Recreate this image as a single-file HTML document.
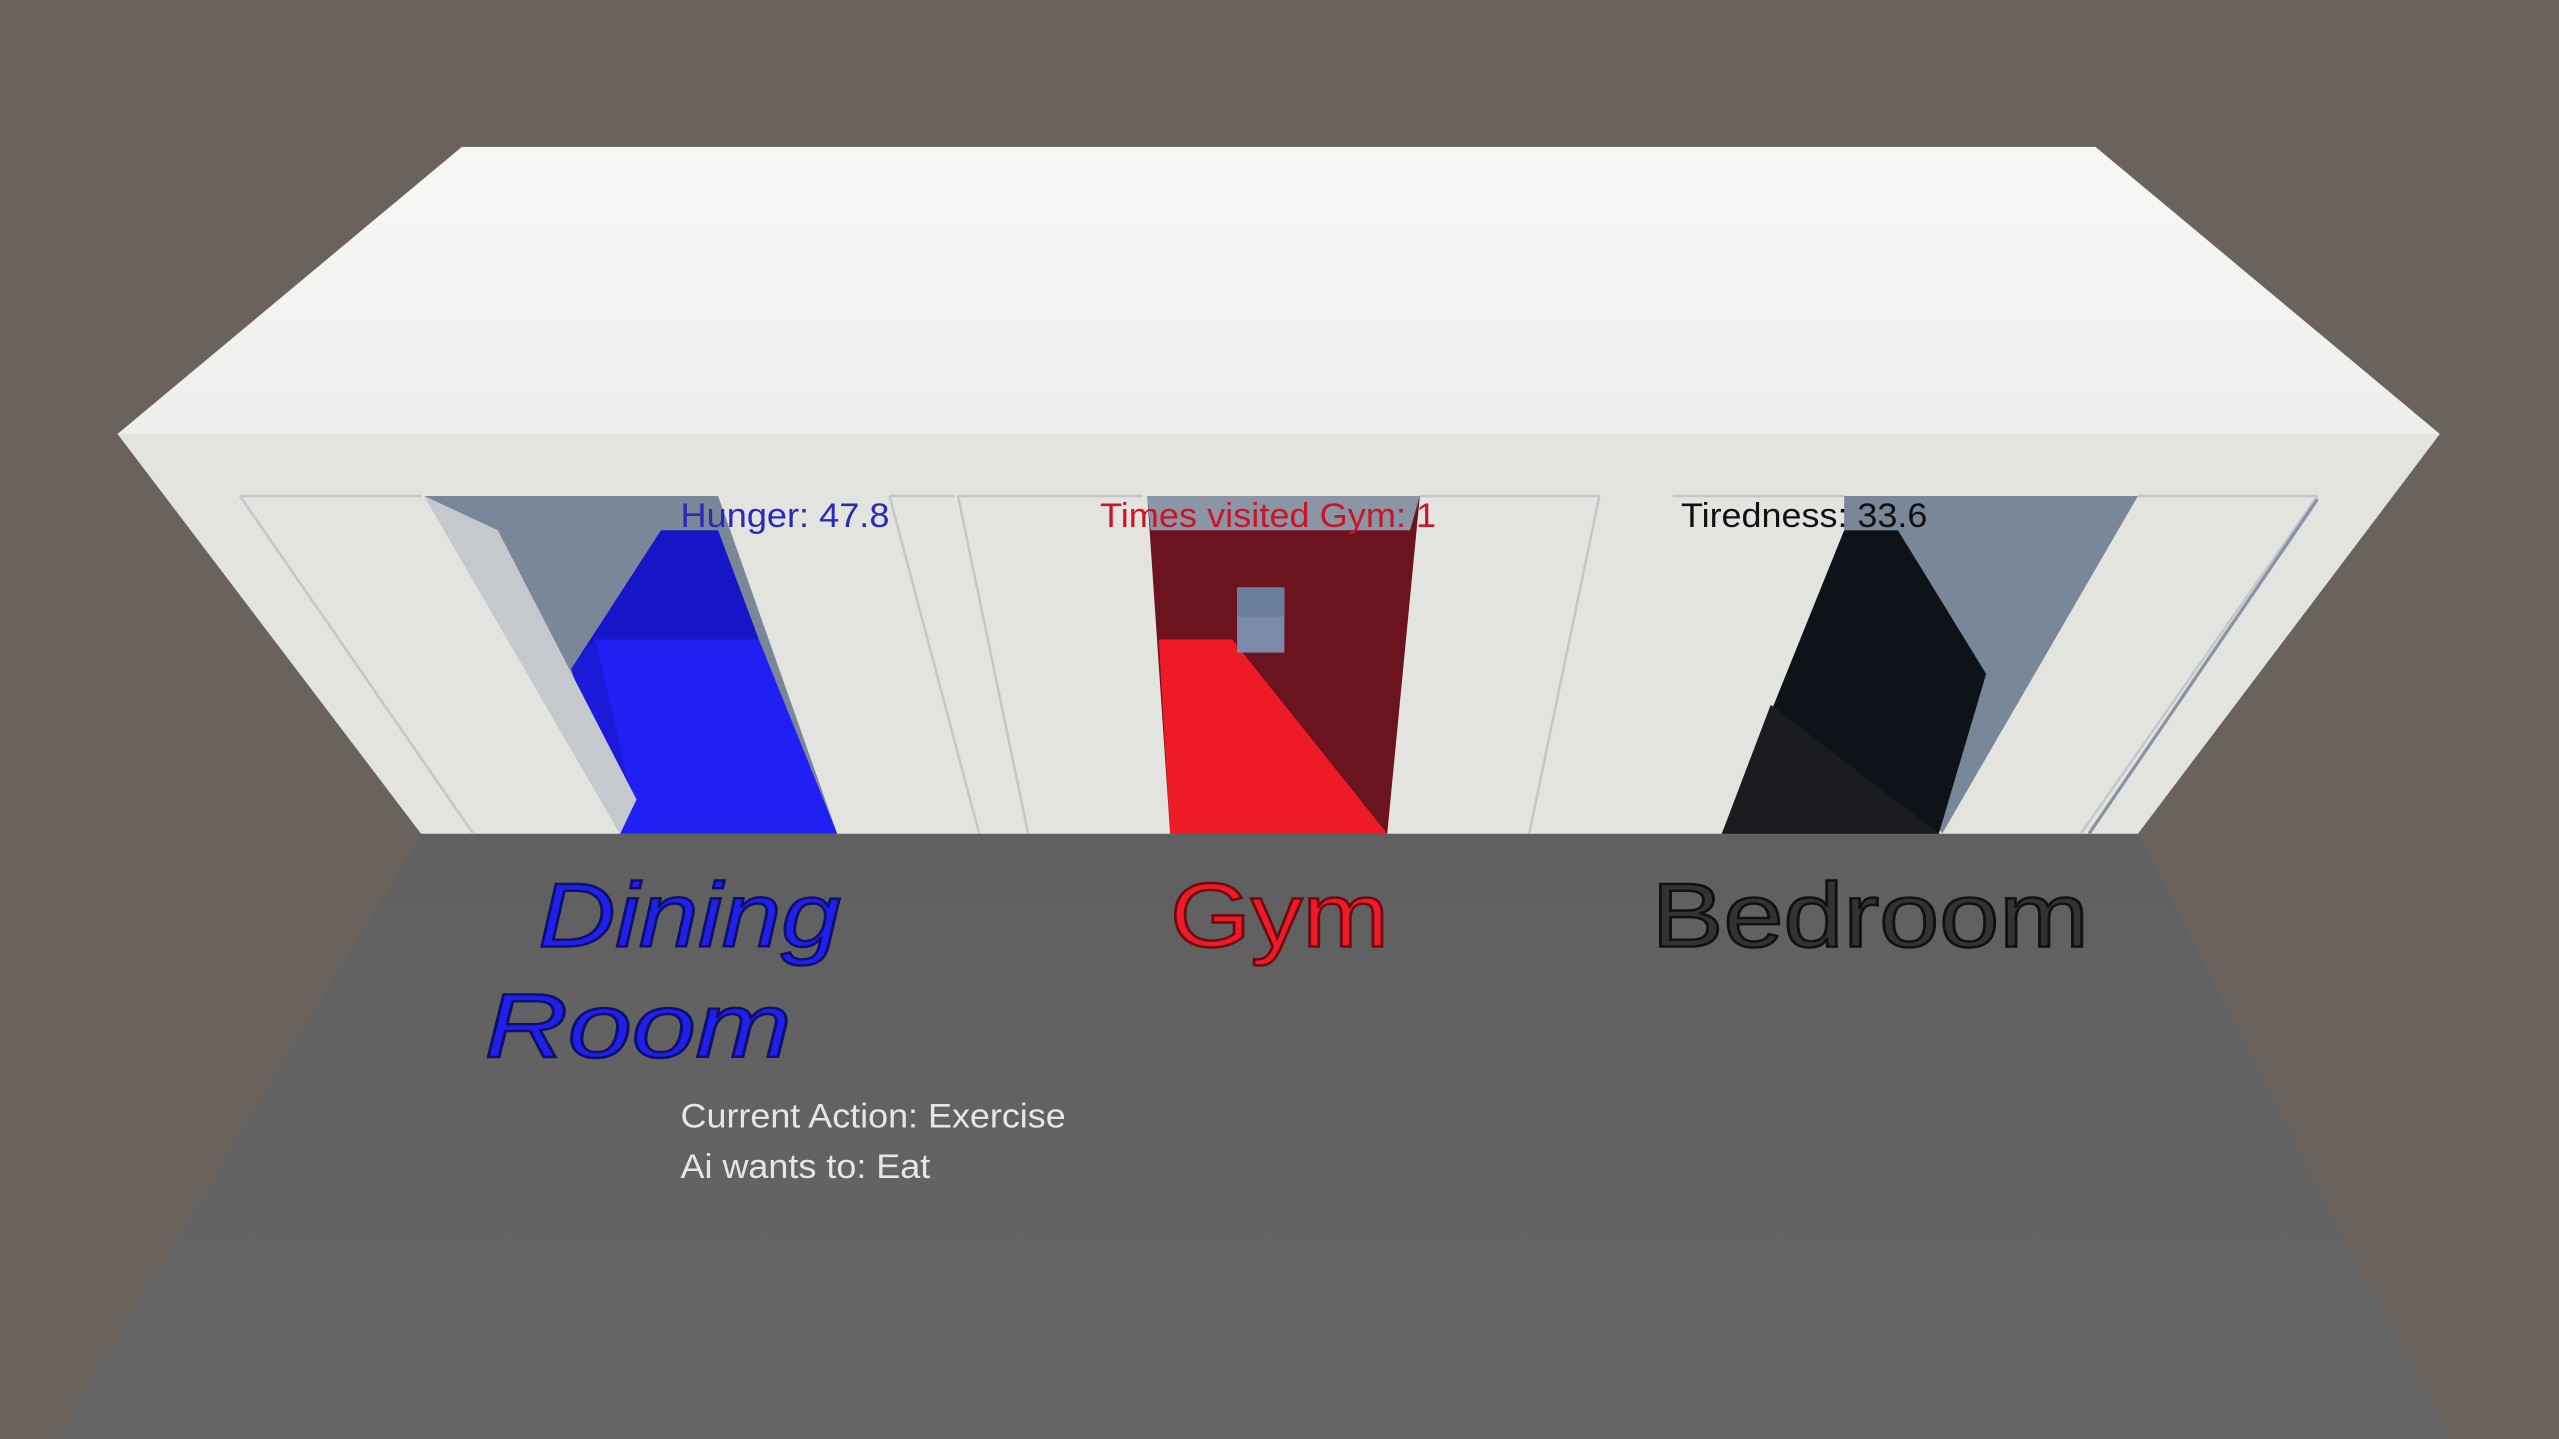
<!DOCTYPE html>
<html><head><meta charset="utf-8"><style>
html,body{margin:0;padding:0;background:#6a625d;overflow:hidden}
svg{display:block}
text{font-family:"Liberation Sans",sans-serif}
</style></head><body>
<svg width="2559" height="1439" viewBox="0 0 1568 882" preserveAspectRatio="none" xmlns="http://www.w3.org/2000/svg">
<defs>
<linearGradient id="top" x1="0" y1="0" x2="0" y2="1"><stop offset="0" stop-color="#f7f7f6"/><stop offset="1" stop-color="#eeeeec"/></linearGradient>
<linearGradient id="floor" x1="0" y1="0" x2="0" y2="1"><stop offset="0" stop-color="#606060"/><stop offset="1" stop-color="#656565"/></linearGradient>
</defs>
<rect width="1568" height="882" fill="#6a625d"/>
<polygon points="258,511 1310,511 1500,882 35,882" fill="url(#floor)"/>
<polygon points="283,90 1284,90 1495,266 72,266" fill="url(#top)"/>
<polygon points="72,266 1495,266 1310,511 258,511" fill="#e3e3df"/>
<g fill="none" stroke="#c4c6c8" stroke-width="1.5">
<line x1="147" y1="304" x2="258" y2="304"/>
<line x1="147" y1="304" x2="290" y2="511"/>
<polyline points="545,304 585,304"/>
<line x1="545" y1="304" x2="600" y2="511"/>
<line x1="587" y1="304" x2="630" y2="511"/>
<line x1="587" y1="304" x2="700" y2="304"/>
<line x1="870" y1="304" x2="980" y2="304"/>
<line x1="980" y1="304" x2="937" y2="511"/>
<line x1="1025" y1="304" x2="1130" y2="304"/>
<line x1="1310" y1="304" x2="1420" y2="304"/>
<line x1="1420" y1="304" x2="1275" y2="511"/>
</g>
<line x1="1420" y1="306" x2="1280" y2="511" stroke="#8894a4" stroke-width="2"/>
<polygon points="260,304 440,304 513,511 380,511" fill="#7a8799"/>
<polygon points="405,325 440,325 465,392 365,392 350,410" fill="#1616c8"/>
<polygon points="365,392 465,392 513,511 380,511 350,410" fill="#2020f4"/>
<polygon points="350,410 365,392 385,480 380,490" fill="#1a1ad8"/>
<polygon points="260,304 305,325 390,490 380,511" fill="#c5c9ce"/>
<polygon points="703,304 870,304 850,511 717,511" fill="#6c1320"/>
<polygon points="703,304 870,304 864,325 705,325" fill="#8a95a5"/>
<polygon points="710,392 755,392 850,511 717,511" fill="#ee1a26"/>
<rect x="758" y="360" width="29" height="40" fill="#7a8aa8"/>
<rect x="758" y="360" width="29" height="18" fill="#6a7e9e"/>
<polygon points="1130,304 1310,304 1190,511 1178,490 1217,413 1163,325 1130,325" fill="#7a8799"/>
<polygon points="1130,325 1163,325 1217,413 1188,511 1055,511" fill="#0d1318"/>
<polygon points="1085,432 1188,511 1055,511" fill="#1a1c1f"/>
<text x="417" y="323" font-size="21" fill="#2a2ab8" textLength="128" lengthAdjust="spacingAndGlyphs">Hunger: 47.8</text>
<text x="674" y="323" font-size="21" fill="#cc1424" textLength="206" lengthAdjust="spacingAndGlyphs">Times visited Gym: 1</text>
<text x="1030" y="323" font-size="21" fill="#111" textLength="151" lengthAdjust="spacingAndGlyphs">Tiredness: 33.6</text>
<g font-size="56" stroke-width="1.5">
<text x="330" y="580" font-style="italic" fill="#2020ee" stroke="#10106a" textLength="185" lengthAdjust="spacingAndGlyphs">Dining</text>
<text x="297" y="648" font-style="italic" fill="#2020ee" stroke="#10106a" textLength="188" lengthAdjust="spacingAndGlyphs">Room</text>
<text x="717" y="580" fill="#ee1a26" stroke="#6a0c12" textLength="134" lengthAdjust="spacingAndGlyphs">Gym</text>
<text x="1012" y="580" fill="#333" stroke="#111" textLength="268" lengthAdjust="spacingAndGlyphs">Bedroom</text>
</g>
<text x="417" y="691" font-size="21" fill="#e6e6e6" textLength="236" lengthAdjust="spacingAndGlyphs">Current Action: Exercise</text>
<text x="417" y="722" font-size="21" fill="#e6e6e6" textLength="153" lengthAdjust="spacingAndGlyphs">Ai wants to: Eat</text>
</svg>
</body></html>
